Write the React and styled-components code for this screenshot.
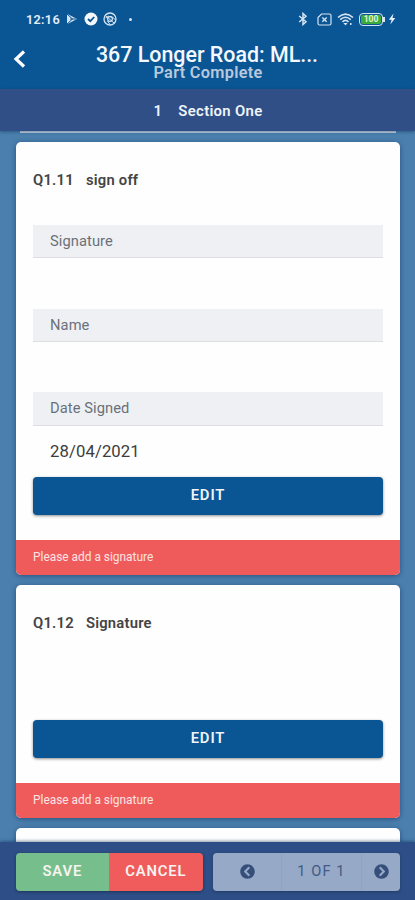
import React from "react";
import { FaChevronCircleLeft, FaChevronCircleRight } from "react-icons/fa";
import styled, { createGlobalStyle } from "styled-components";

const GlobalStyle = createGlobalStyle`
  * {
    box-sizing: border-box;
  }

  body {
    margin: 0;
    font-family: Roboto, "Liberation Sans", sans-serif;
    background: #4a7fae;
  }
`;

function StatusBar() {
  return (
    <StatusBarStyled>
      <div className="left">
        <span className="time">12:16</span>
        <svg className="play" width="12" height="12" viewBox="0 0 12 12">
          <path d="M1 0.8 L11 6 L1 11.2 Z" fill="#d5e4f3" />
          <path d="M1 1 L6.5 6 L1 11 M4 6 H10" stroke="#0a5594" fill="none" />
        </svg>
        <svg className="check" width="14" height="14" viewBox="0 0 14 14">
          <circle cx="7" cy="7" r="6.5" fill="#f4f8fc" />
          <path
            d="M4 7 L6.3 9.2 L10.2 5"
            stroke="#0a5594"
            strokeWidth="1.8"
            fill="none"
          />
        </svg>
        <svg className="aperture" width="14" height="14" viewBox="0 0 14 14">
          <g stroke="#d5e4f3" fill="none">
            <circle cx="7" cy="7" r="6" strokeWidth="1.3" />
            <circle cx="7" cy="7" r="2.4" strokeWidth="1.2" />
            <path d="M2.5 3.5 L11 11 M2.5 6 Q5 3 9.5 5 L12.5 8 M4.5 9 L7 12.5" />
          </g>
        </svg>
        <span className="dot" />
      </div>
      <div className="right">
        <svg width="10" height="14" viewBox="0 0 10 14">
          <path
            d="M1.2 4 L8 9.8 L5 12.5 V1.5 L8 4.2 L1.2 10"
            stroke="#d5e4f3"
            strokeWidth="1.5"
            fill="none"
          />
        </svg>
        <svg className="sim" width="15" height="13" viewBox="0 0 15 13">
          <path
            d="M4.5 1 H12.5 Q14 1 14 2.5 V10.5 Q14 12 12.5 12 H2.5 Q1 12 1 10.5 V4.5 Z"
            stroke="#d5e4f3"
            strokeWidth="1.2"
            fill="none"
          />
          <path
            d="M5.3 4.4 L9.7 8.8 M9.7 4.4 L5.3 8.8"
            stroke="#d5e4f3"
            strokeWidth="1.4"
          />
        </svg>
        <svg className="wifi" width="17" height="13" viewBox="0 0 17 13">
          <g stroke="#d5e4f3" strokeWidth="1.6" fill="none">
            <path d="M1 4.5 Q8.5 -2.2 16 4.5" />
            <path d="M3.2 6.7 Q8.5 1.8 13.8 6.7" />
            <path d="M5.5 8.8 Q8.5 6 11.5 8.8" />
          </g>
          <path d="M6.4 10 H10.6 L8.5 12.5 Z M13 10 h1.5 v2 h-1.5 z" fill="#d5e4f3" />
        </svg>
        <Battery>
          <span>100</span>
        </Battery>
        <svg className="bolt" width="8" height="12" viewBox="0 0 8 12">
          <path d="M5.5 0.5 L0.8 6.7 H3.6 L2.3 11.5 L7.3 5 H4.5 Z" fill="#e8f1f9" />
        </svg>
      </div>
    </StatusBarStyled>
  );
}

function Question({ number, title, height, children }) {
  return (
    <Card $height={height}>
      <QuestionTitle>
        <span>{number}</span>
        <span>{title}</span>
      </QuestionTitle>
      {children}
      <EditButton>EDIT</EditButton>
      <Alert>Please add a signature</Alert>
    </Card>
  );
}

function App() {
  return (
    <Page>
      <GlobalStyle />
      <Header>
        <StatusBar />
        <TitleRow>
          <BackButton aria-label="Back">
            <svg width="14" height="18" viewBox="0 0 14 18">
              <path
                d="M11 1.5 L3 9 L11 16.5"
                stroke="#fff"
                strokeWidth="3.2"
                fill="none"
              />
            </svg>
          </BackButton>
          <div className="titles">
            <h1>367 Longer Road: ML...</h1>
            <p>Part Complete</p>
          </div>
        </TitleRow>
      </Header>
      <SectionBar>
        <span>1</span>
        <span>Section One</span>
      </SectionBar>
      <Content>
        <PreviousEdge />
        <Question number="Q1.11" title="sign off" height={433}>
          <Fields>
            <Field>Signature</Field>
            <Field>Name</Field>
            <Field>Date Signed</Field>
          </Fields>
          <DateValue>28/04/2021</DateValue>
        </Question>
        <Question number="Q1.12" title="Signature" height={232.5} />
        <Card $height={60} />
      </Content>
      <Footer>
        <Actions>
          <Action $color="#76bf8c" $width={92.5}>
            SAVE
          </Action>
          <Action $color="#f05c5c" $width={94.5}>
            CANCEL
          </Action>
        </Actions>
        <Pager>
          <button aria-label="Previous page">
            <FaChevronCircleLeft />
          </button>
          <span>1 OF 1</span>
          <button aria-label="Next page">
            <FaChevronCircleRight />
          </button>
        </Pager>
      </Footer>
    </Page>
  );
}

const Page = styled.div`
  display: flex;
  flex-direction: column;
  width: 415px;
  height: 900px;
  overflow: hidden;
  background: #4a7fae;
`;

const Header = styled.header`
  flex: none;
  height: 89px;
  background: #0a5594;
`;

const StatusBarStyled = styled.div`
  display: flex;
  justify-content: space-between;
  height: 38px;
  padding: 0 19px 0 26px;

  .left,
  .right {
    display: flex;
    align-items: center;
  }

  .time {
    color: #e4eef8;
    font-size: 12.7px;
    font-weight: 600;
    letter-spacing: 0.3px;
  }

  .play {
    margin-left: 6px;
  }

  .check {
    margin-left: 6px;
  }

  .aperture {
    margin-left: 5px;
  }

  .dot {
    width: 3px;
    height: 3px;
    margin-left: 12px;
    border-radius: 50%;
    background: #d5e4f3;
  }

  .sim {
    margin-left: 9px;
  }

  .wifi {
    margin-left: 5px;
  }

  .bolt {
    margin-left: 3px;
  }
`;

const Battery = styled.div`
  display: flex;
  position: relative;
  width: 24px;
  height: 13px;
  margin: 0 2px 0 5px;
  padding: 1px;
  border: 1px solid #d5e4f3;
  border-radius: 4px;

  span {
    flex: 1;
    border-radius: 2px;
    background: #3bab3c;
    color: #e3f5d8;
    font-size: 8.5px;
    font-weight: 700;
    line-height: 9px;
    text-align: center;
  }

  &::after {
    content: "";
    position: absolute;
    top: 3px;
    right: -3px;
    width: 2px;
    height: 5px;
    background: #d5e4f3;
  }
`;

const TitleRow = styled.div`
  display: flex;
  height: 51px;
  padding-left: 13px;

  .titles {
    flex: 1;
    padding: 6px 40px 0 0;
    text-align: center;
  }

  h1 {
    margin: 0;
    color: #f5f9fd;
    font-size: 21.4px;
    font-weight: 500;
    line-height: 22px;
    white-space: nowrap;
  }

  p {
    margin: -1px 0 0;
    padding-left: 2px;
    color: #b9c9dc;
    font-size: 16.3px;
    font-weight: 600;
    line-height: 16px;
    letter-spacing: 0.3px;
  }
`;

const BackButton = styled.button`
  display: flex;
  width: 26px;
  height: 18px;
  margin-top: 12px;
  padding: 0;
  border: 0;
  background: none;
`;

const SectionBar = styled.div`
  display: flex;
  flex: none;
  justify-content: center;
  gap: 16px;
  height: 41.5px;
  padding: 1px 0 0 1px;
  background: #2f4f86;
  box-shadow: 0 1px 3px rgba(20, 50, 90, 0.5);
  color: #eef3fa;
  font-size: 14.9px;
  font-weight: 600;
  line-height: 42px;
  letter-spacing: 0.3px;
  z-index: 1;
`;

const Content = styled.main`
  display: flex;
  flex: 1;
  flex-direction: column;
  gap: 10.5px;
  min-height: 0;
  padding: 0 15px 0 16px;
  overflow: hidden;
`;

const PreviousEdge = styled.div`
  flex: none;
  height: 2px;
  margin: 0 4px -1.5px;
  background: #c7d6e6;
`;

const Card = styled.section`
  display: flex;
  flex: none;
  flex-direction: column;
  height: ${({ $height }) => $height}px;
  padding: 0 17px;
  border-radius: 5px;
  background: #fefefe;
  box-shadow: 0 1px 5px rgba(20, 50, 90, 0.6);
  overflow: hidden;
`;

const QuestionTitle = styled.h2`
  display: flex;
  gap: 12px;
  margin: 28px 0 0;
  color: #444;
  font-size: 14.8px;
  font-weight: 600;
  line-height: 20px;
  letter-spacing: 0.22px;
`;

const Fields = styled.div`
  display: flex;
  flex-direction: column;
  gap: 50.3px;
  margin-top: 35.7px;
`;

const Field = styled.div`
  height: 33.3px;
  padding-left: 17px;
  border-bottom: 1px solid #dcdee2;
  background: #eef0f4;
  color: #6b7078;
  font-size: 14.7px;
  line-height: 32px;
  letter-spacing: 0.08px;
`;

const DateValue = styled.div`
  padding: 16px 0 0 17px;
  color: #3c3c3c;
  font-size: 16.7px;
  line-height: 20px;
  letter-spacing: 0.1px;
`;

const EditButton = styled.button`
  height: 38px;
  margin-top: auto;
  padding: 0 0 2px;
  border: 0;
  border-radius: 4px;
  background: #0a5594;
  box-shadow: 0 1px 3px rgba(0, 0, 0, 0.45);
  color: #eef4fa;
  font-family: inherit;
  font-size: 14.8px;
  font-weight: 600;
  letter-spacing: 0.9px;
`;

const Alert = styled.div`
  height: 35px;
  margin: 25px -17px 0;
  padding-left: 17px;
  background: #ef5b5b;
  color: #fde3e3;
  font-size: 11.9px;
  line-height: 34px;
`;

const Footer = styled.footer`
  display: flex;
  flex: none;
  justify-content: space-between;
  height: 58px;
  padding: 11px 15px 9px 16px;
  background: #2d4e86;
  box-shadow: 0 -1px 3px rgba(20, 50, 90, 0.5);
  z-index: 1;
`;

const Actions = styled.div`
  display: flex;
  border-radius: 4px;
  box-shadow: 0 1px 3px rgba(0, 0, 0, 0.35);
  overflow: hidden;
`;

const Action = styled.button`
  width: ${({ $width }) => $width}px;
  padding: 0 0 2px;
  border: 0;
  background: ${({ $color }) => $color};
  color: #f6f3f0;
  font-family: inherit;
  font-size: 14.8px;
  font-weight: 600;
  letter-spacing: 0.85px;
`;

const Pager = styled.div`
  display: grid;
  grid-template-columns: 68px 81px 38px;
  border-radius: 4px;
  background: #96a9c7;
  box-shadow: 0 1px 3px rgba(0, 0, 0, 0.25);
  color: #425a84;

  span {
    border: solid #8fa3c2;
    border-width: 0 1px;
    font-size: 14.6px;
    line-height: 37px;
    letter-spacing: 1.1px;
    text-align: center;
  }

  button {
    display: flex;
    align-items: center;
    justify-content: center;
    padding: 0 0 1px;
    border: 0;
    background: none;
    color: #364f7a;
    font-size: 15px;
  }
`;

export default App;
